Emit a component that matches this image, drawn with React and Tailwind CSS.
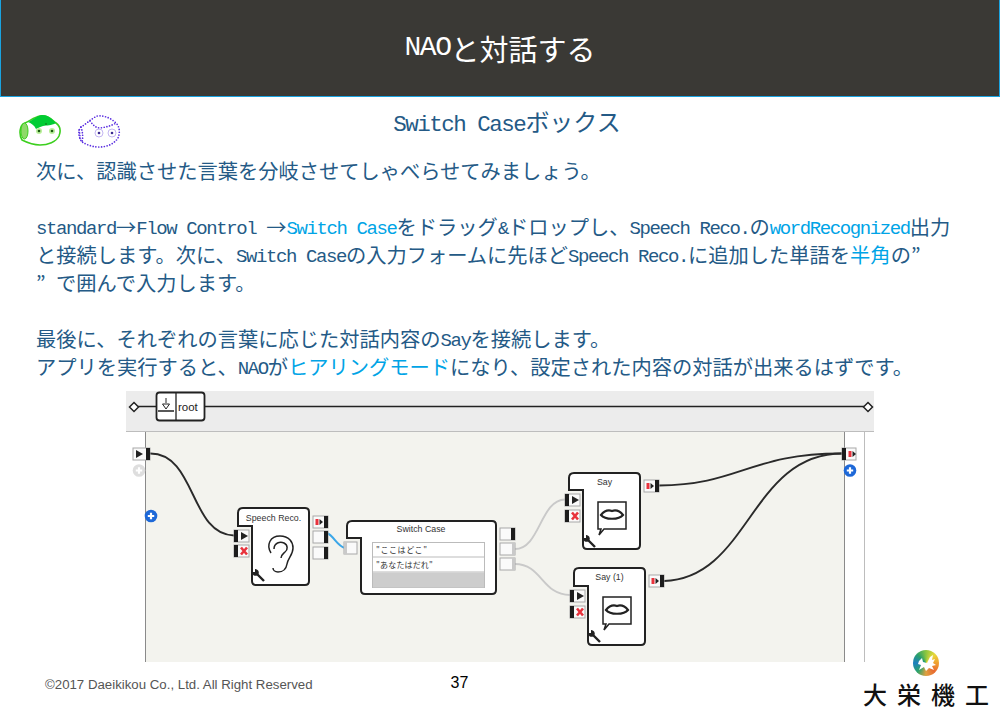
const L = ({ children }) => (
  <span className="align-[1px] font-['Liberation_Mono',monospace] text-[19px] leading-none tracking-[-1.4px]">{children}</span>
);

const Hi = ({ children }) => <span className="text-[#00a4e6]">{children}</span>;

const Quote = () => <span className="inline-block w-[20px]">”</span>;

const Port = ({ x, y, w = 15, h = 12, side, kind }) => {
  const midY = y + h / 2;
  const blackX = side === 'left' ? x : x + w - 4;
  const iconX = side === 'left' ? x + 4 : x;
  return (
    <g>
      <rect x={x} y={y} width={w} height={h} fill="#fafafa" stroke="#a8a8a8" strokeWidth="1" />
      {side && <rect x={blackX} y={y} width="4" height={h} fill="#1c1c1c" />}
      {kind === 'play' && (
        <path d={`M${iconX + 3} ${midY - 4} L${iconX + 10} ${midY} L${iconX + 3} ${midY + 4}Z`} fill="#222" />
      )}
      {kind === 'out' && (
        <>
          <rect x={iconX + 2.5} y={midY - 3} width="3" height="6" fill="#e8323c" />
          <path d={`M${iconX + 6.5} ${midY - 3} L${iconX + 10} ${midY} L${iconX + 6.5} ${midY + 3}Z`} fill="#222" />
        </>
      )}
      {kind === 'x' && (
        <path
          d={`M${iconX + 3} ${midY - 3.5} L${iconX + 9} ${midY + 3.5} M${iconX + 9} ${midY - 3.5} L${iconX + 3} ${midY + 3.5}`}
          stroke="#e8323c"
          strokeWidth="2.6"
        />
      )}
    </g>
  );
};

const Plus = ({ cx, cy, fill = '#1d68d8' }) => (
  <g>
    <circle cx={cx} cy={cy} r="6.3" fill={fill} />
    <path d={`M${cx - 3.2} ${cy} H${cx + 3.2} M${cx} ${cy - 3.2} V${cy + 3.2}`} stroke="#fff" strokeWidth="2.2" />
  </g>
);

const Wrench = ({ x, y }) => (
  <g>
    <path d={`M${x - 3} ${y - 3} L${x + 6} ${y + 6}`} stroke="#222" strokeWidth="2.4" />
    <path d={`M${x - 6} ${y - 3} A3.6 3.6 0 0 0 ${x - 1} ${y + 0.5} L${x + 0.5} ${y - 1} A3.6 3.6 0 0 0 ${x - 3} ${y - 6} L${x - 3} ${y - 3}Z`} fill="#222" />
  </g>
);

// box with the notch on the top left corner
const Box = ({ x, y, r, b, nx, ny }) => (
  <path
    d={`M${x} ${ny} V${y + 5} Q${x} ${y} ${x + 5} ${y} H${r - 4} Q${r} ${y} ${r} ${y + 4} V${b - 4} Q${r} ${b} ${r - 4} ${b} H${nx + 4} Q${nx} ${b} ${nx} ${b - 4} V${ny} Z`}
    fill="#fff"
    stroke="#222"
    strokeWidth="2"
  />
);

const Bubble = ({ x, y }) => (
  <g>
    <path
      d={`M${x} ${y} H${x + 28} V${y + 27} H${x + 6} L${x + 1} ${y + 33} L${x + 3} ${y + 27} H${x} Z`}
      fill="#fff"
      stroke="#222"
      strokeWidth="1.5"
    />
    <path
      d={`M${x + 3} ${y + 13} C${x + 7} ${y + 8} ${x + 11} ${y + 8} ${x + 14} ${y + 9} C${x + 17} ${y + 8} ${x + 21} ${y + 8} ${x + 25} ${y + 13} C${x + 21} ${y + 18} ${x + 7} ${y + 18} ${x + 3} ${y + 13} Z`}
      fill="#fff"
      stroke="#222"
      strokeWidth="2.2"
    />
  </g>
);

const Diagram = () => (
  <svg className="absolute inset-0 h-full w-full" viewBox="126 391 748 271">
    {/* root bar */}
    <path d="M138 406.5 H864" stroke="#222" strokeWidth="1.7" />
    <path d="M134 402.5 L138.5 407 L134 411.5 L129.5 407Z" fill="#fff" stroke="#222" strokeWidth="1.5" />
    <path d="M868 402.5 L872.5 407 L868 411.5 L863.5 407Z" fill="#fff" stroke="#222" strokeWidth="1.5" />
    <rect x="156.5" y="392.5" width="48" height="28" rx="3" fill="#fff" stroke="#222" strokeWidth="1.8" />
    <path d="M176 392.5 V420.5 M158 411 H174" stroke="#222" strokeWidth="1.3" />
    <path d="M166 398 V403 M162.5 404 H169.5 L166 409Z" fill="none" stroke="#222" strokeWidth="1" />
    <text x="178" y="411" fontFamily="Liberation Sans" fontSize="11.5" fill="#222">root</text>

    {/* wires */}
    <g fill="none" strokeWidth="1.9">
      <path d="M150 453.5 C196 453 190 535 234 535.5" stroke="#2a2a2a" />
      <path d="M327 533 C334 536 337 546 345 548" stroke="#3aa6e8" strokeWidth="2" />
      <path d="M515 549 C540 549 540 500 565 499.5" stroke="#c9c9c9" />
      <path d="M515 564 C542 564 542 595 570 595" stroke="#c9c9c9" />
      <path d="M659 485.5 C740 485 750 453 843 453.5" stroke="#2a2a2a" />
      <path d="M664 581 C750 578 750 453 843 453.5" stroke="#2a2a2a" />
    </g>

    {/* stage ports */}
    <Port x={133} y={448} w={17} h={12} side="right" kind="none" />
    <path d="M136 450 L143 454 L136 458Z" fill="#222" />
    <Plus cx={139} cy={470.5} fill="#dedede" />
    <Plus cx={151} cy={516} />
    <Port x={842} y={448} w={14} h={12} side="left" kind="out" />
    <Plus cx={850} cy={470.5} />

    {/* Speech Reco. */}
    <Box x={238} y={508} r={309} b={585} nx={252} ny={526} />
    <text x="273.5" y="520.5" textAnchor="middle" fontFamily="Liberation Sans" fontSize="8.8" fill="#333">Speech Reco.</text>
    <path
      d="M271 553 C266 545 270 536 280 536 C289 536 293 542 293 548 C293 555 288 558 287 564 C286 570 282 572 278 572 C275 572 273 570 273 568 M274 549 C274 543 280 541 284 543 C288 545 288 550 285 552 C283 554 281 555 281 558"
      fill="none"
      stroke="#222"
      strokeWidth="1.5"
    />
    <Wrench x={258} y={575} />
    <Port x={234} y={530} side="left" kind="play" />
    <Port x={234} y={545} side="left" kind="x" />
    <Port x={313} y={516} side="right" kind="out" />
    <Port x={313} y={531} side="right" />
    <Port x={313} y={547} side="right" />

    {/* Switch Case */}
    <Box x={347} y={521} r={496} b={594} nx={361} ny={538} />
    <text x="421" y="532" textAnchor="middle" fontFamily="Liberation Sans" fontSize="8.8" fill="#333">Switch Case</text>
    <rect x="372.5" y="542.5" width="112" height="45" fill="#fff" stroke="#bbb" />
    <path d="M372.5 557 H484.5 M372.5 572 H484.5" stroke="#bbb" />
    <rect x="373" y="572.5" width="111" height="15" fill="#cdcdcd" />
    <text x="376" y="552.5" fontFamily="Noto Sans CJK JP" fontSize="8" letterSpacing="0.6" fill="#333">"ここはどこ"</text>
    <text x="376" y="567.5" fontFamily="Noto Sans CJK JP" fontSize="8" letterSpacing="0.2" fill="#333">"あなたはだれ"</text>
    <Port x={344} y={542} w={13} h={12} />
    <rect x="344" y="542" width="3" height="12" fill="#c9c9c9" />
    <Port x={500} y={528} side="right" />
    <Port x={500} y={543} />
    <rect x="512" y="543" width="3" height="12" fill="#c9c9c9" />
    <Port x={500} y={558} />
    <rect x="512" y="558" width="3" height="12" fill="#c9c9c9" />

    {/* Say */}
    <Box x={569} y={473} r={640} b={549} nx={583} ny={490} />
    <text x="604.5" y="484.5" textAnchor="middle" fontFamily="Liberation Sans" fontSize="8.8" fill="#333">Say</text>
    <Bubble x={598} y={502} />
    <Wrench x={589} y={541} />
    <Port x={565} y={494} side="left" kind="play" />
    <Port x={565} y={510} side="left" kind="x" />
    <Port x={644} y={480} side="right" kind="out" />

    {/* Say (1) */}
    <Box x={574} y={568} r={645} b={645} nx={588} ny={586} />
    <text x="609.5" y="580" textAnchor="middle" fontFamily="Liberation Sans" fontSize="8.8" fill="#333">Say (1)</text>
    <Bubble x={603} y={597} />
    <Wrench x={594} y={636} />
    <Port x={570} y={590} side="left" kind="play" />
    <Port x={570} y={606} side="left" kind="x" />
    <Port x={649} y={575} side="right" kind="out" />
  </svg>
);

const GreenRobot = () => (
  <svg width="44" height="34" viewBox="0 0 44 34">
    <path d="M7 10 C12 8 16 4 22 3 C30 2 34 7 38 10 C42 13 43 18 41 23 C38 29 30 32 22 32 C14 32 8 29 4 27 C1 22 1 12 7 10 Z" fill="#fff" stroke="#3ccf1e" strokeWidth="1.6" />
    <path d="M10 9 C15 7 18 3 24 2 C31 2 35 7 38 10 C33 13 29 12 25 13 C22 14 20 15 18 16 C16 12 13 10 10 9 Z" fill="#00cc33" />
    <ellipse cx="6.5" cy="18" rx="3.5" ry="8" fill="#8fd96a" stroke="#3ccf1e" />
    <circle cx="21" cy="18" r="3" fill="#b9f09a" />
    <circle cx="21" cy="18" r="1.3" fill="#1a5a10" />
    <circle cx="34" cy="18" r="3" fill="#b9f09a" />
    <circle cx="34" cy="18" r="1.3" fill="#1a5a10" />
    <circle cx="28" cy="11" r="0.8" fill="#1a5a10" />
  </svg>
);

const DottedRobot = () => (
  <svg width="44" height="36" viewBox="0 0 44 36" fill="none">
    <g stroke="#5a2ee0" strokeLinecap="round" strokeDasharray="0 2.8" strokeWidth="1.7">
      <path d="M4 14 C9 11 14 6 20 3 C28 2 35 6 39 10 C43 14 43 20 41 25 C37 31 30 34 22 34 C14 34 9 31 5 29 C1 24 1 17 4 14 Z" />
      <path d="M13 8 C16 12 19 15 23 15 C29 14 34 13 39 10" />
      <path d="M4 14 C6 20 6 25 5 29 M2 17 C3 21 3 24 3 27" />
    </g>
    <circle cx="22" cy="20" r="4" stroke="#c4b6f2" />
    <circle cx="22" cy="20" r="1.3" fill="#3a2a90" />
    <circle cx="35" cy="20" r="4" stroke="#c4b6f2" />
    <circle cx="35" cy="20" r="1.3" fill="#3a2a90" />
  </svg>
);

const App = () => {
  return (
    <div className="flex h-[707px] w-[1000px] flex-col overflow-hidden bg-white font-['Noto_Sans_CJK_JP',sans-serif] text-[#245a86]" lang="ja">
      {/* Title bar */}
      <div className="flex h-[97px] shrink-0 items-center justify-center border border-t-0 border-[#1aa3e0] bg-[#3a3935] text-[29px] leading-none text-white">
        <span className="font-['Liberation_Mono',monospace] text-[28px] leading-none tracking-[-1.5px]">NAO</span>と対話する
      </div>

      {/* Heading and robots */}
      <div className="grid h-[60px] shrink-0 grid-cols-[1fr_auto_1fr] pl-[14px]">
        <div className="flex items-start gap-[15px] pl-[4px] pt-[16px]">
          <GreenRobot />
          <DottedRobot />
        </div>
        <div className="pt-[6px] text-[24px] leading-[36px]">
          <span className="font-['Liberation_Mono',monospace] text-[22.5px] leading-none tracking-[-1.5px]">Switch Case</span>ボックス
        </div>
        <div />
      </div>

      {/* Body text */}
      <div className="shrink-0 whitespace-nowrap pl-[36px] text-[20.25px] leading-[28px]">
        <p>次に、認識させた言葉を分岐させてしゃべらせてみましょう。</p>
        <p className="mt-[28px]">
          <L>standard</L>→<L>Flow Control </L>→<Hi><L>Switch Case</L></Hi>をドラッグ<L>&amp;</L>ドロップし、<L>Speech Reco.</L>の<Hi><L>wordRecognized</L></Hi>出力
        </p>
        <p>
          と接続します。次に、<L>Switch Case</L>の入力フォームに先ほど<L>Speech Reco.</L>に追加した単語を<Hi>半角</Hi>の<Quote />
        </p>
        <p><Quote />で囲んで入力します。</p>
        <p className="mt-[28px]">最後に、それぞれの言葉に応じた対話内容の<L>Say</L>を接続します。</p>
        <p>
          アプリを実行すると、<L>NAO</L>が<Hi>ヒアリングモード</Hi>になり、設定された内容の対話が出来るはずです。
        </p>
      </div>

      {/* Choregraphe screenshot */}
      <div className="relative mx-[126px] mt-[10px] flex h-[271px] shrink-0 flex-col">
        <div className="h-[41px] border-b border-[#bdbdbd] bg-[#ececec]" />
        <div className="flex flex-1">
          <div className="w-[20px] border-r border-[#8a8a8a] bg-white" />
          <div className="flex-1 bg-[#f3f3ee]" />
          <div className="w-[20px] border-l border-[#8a8a8a] bg-white" />
          <div className="mr-[9px] w-px bg-[#bdbdbd]" />
        </div>
        <Diagram />
      </div>

      {/* Footer */}
      <div className="relative flex flex-1 items-start font-['Liberation_Sans',sans-serif]">
        <span className="ml-[45px] mt-[15px] text-[13.25px] leading-[15px] text-[#555]">©2017 Daeikikou Co., Ltd. All Right Reserved</span>
        <span className="ml-[138px] mt-[11px] text-[16px] leading-[20px] text-black">37</span>
        <div className="absolute right-0 top-[-12px] flex w-[142px] flex-col items-start">
          <div className="relative ml-[55px] h-[26px] w-[26px] rounded-full bg-[conic-gradient(#8cc63f,#e8d83a,#f0a030,#e86a30,#e0a040,#2aa36b,#1c7fc0,#2aa06a,#8cc63f)]">
            <svg className="absolute inset-0" viewBox="0 0 26 26">
              <path d="M6 11 L9 8 L10 12 L14 13 L17 7 L20 5 L19 10 L22 9 L20 13 L23 15 L19 16 L21 20 L16 18 L13 21 L11 17 L6 20 L8 15 L5 14Z" fill="#fff" />
            </svg>
          </div>
          <div className="ml-[5px] mt-[6px] whitespace-nowrap font-['Noto_Sans_CJK_JP',serif] text-[24px] font-medium leading-[24px] tracking-[10px] text-[#111]">大栄機工</div>
        </div>
      </div>
    </div>
  );
};

export default App;
